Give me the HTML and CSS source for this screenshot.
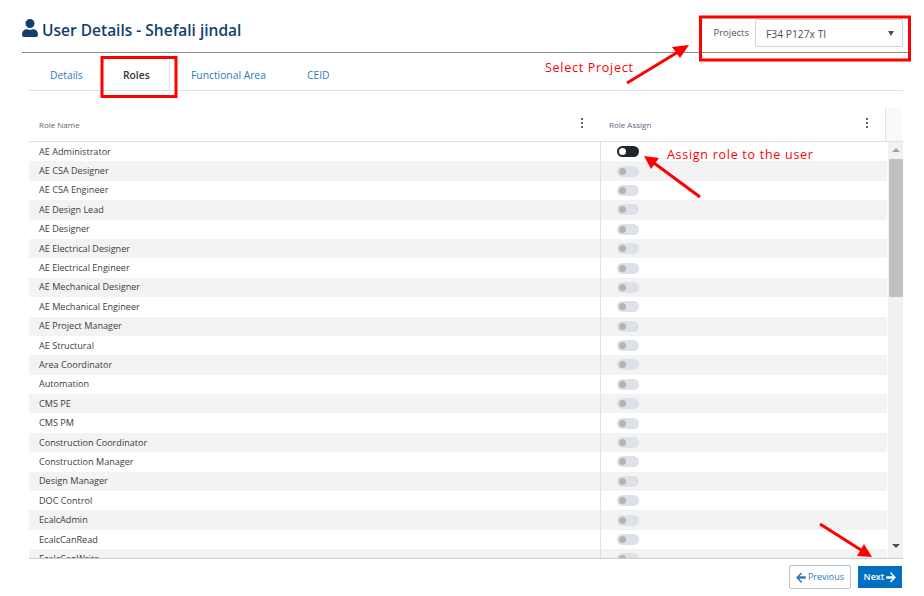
FILE: index.html
```html
<!DOCTYPE html>
<html lang="en">
<head>
<meta charset="utf-8">
<title>User Details</title>
<link rel="stylesheet" href="styles.css">
</head>
<body>
<div class="page">
  <header class="head">
    <h1 class="title">
      <svg class="user-icon" viewBox="0 0 448 512"><path d="M224 256a128 128 0 1 0 0-256 128 128 0 0 0 0 256zm90 32h-17a174 174 0 0 1-146 0h-17A134 134 0 0 0 0 422v42a48 48 0 0 0 48 48h352a48 48 0 0 0 48-48v-42a134 134 0 0 0-134-134z"/></svg>
      User Details - Shefali jindal
    </h1>
    <div class="projects">
      <span class="projects-label">Projects</span>
      <div class="select"><span class="select-value">F34 P127x TI</span><i class="caret"></i></div>
    </div>
  </header>
  <nav class="tabs">
    <a class="tab tab-details">Details</a>
    <a class="tab tab-roles">Roles</a>
    <a class="tab tab-fa">Functional Area</a>
    <a class="tab tab-ceid">CEID</a>
  </nav>
  <section class="grid">
    <div class="grid-head">
      <div class="hcell hcell-name"><span>Role Name</span><i class="dots"></i></div>
      <div class="hcell hcell-assign"><span>Role Assign</span><i class="dots"></i></div>
      <div class="hcell-end"></div>
    </div>
    <div class="grid-body">
      <div class="rows">
        <div class="row"><span class="name">AE Administrator</span><span class="assign"><i class="toggle on"></i></span></div>
        <div class="row"><span class="name">AE CSA Designer</span><span class="assign"><i class="toggle"></i></span></div>
        <div class="row"><span class="name">AE CSA Engineer</span><span class="assign"><i class="toggle"></i></span></div>
        <div class="row"><span class="name">AE Design Lead</span><span class="assign"><i class="toggle"></i></span></div>
        <div class="row"><span class="name">AE Designer</span><span class="assign"><i class="toggle"></i></span></div>
        <div class="row"><span class="name">AE Electrical Designer</span><span class="assign"><i class="toggle"></i></span></div>
        <div class="row"><span class="name">AE Electrical Engineer</span><span class="assign"><i class="toggle"></i></span></div>
        <div class="row"><span class="name">AE Mechanical Designer</span><span class="assign"><i class="toggle"></i></span></div>
        <div class="row"><span class="name">AE Mechanical Engineer</span><span class="assign"><i class="toggle"></i></span></div>
        <div class="row"><span class="name">AE Project Manager</span><span class="assign"><i class="toggle"></i></span></div>
        <div class="row"><span class="name">AE Structural</span><span class="assign"><i class="toggle"></i></span></div>
        <div class="row"><span class="name">Area Coordinator</span><span class="assign"><i class="toggle"></i></span></div>
        <div class="row"><span class="name">Automation</span><span class="assign"><i class="toggle"></i></span></div>
        <div class="row"><span class="name">CMS PE</span><span class="assign"><i class="toggle"></i></span></div>
        <div class="row"><span class="name">CMS PM</span><span class="assign"><i class="toggle"></i></span></div>
        <div class="row"><span class="name">Construction Coordinator</span><span class="assign"><i class="toggle"></i></span></div>
        <div class="row"><span class="name">Construction Manager</span><span class="assign"><i class="toggle"></i></span></div>
        <div class="row"><span class="name">Design Manager</span><span class="assign"><i class="toggle"></i></span></div>
        <div class="row"><span class="name">DOC Control</span><span class="assign"><i class="toggle"></i></span></div>
        <div class="row"><span class="name">EcalcAdmin</span><span class="assign"><i class="toggle"></i></span></div>
        <div class="row"><span class="name">EcalcCanRead</span><span class="assign"><i class="toggle"></i></span></div>
        <div class="row"><span class="name">EcalcCanWrite</span><span class="assign"><i class="toggle"></i></span></div>
      </div>
      <div class="scrollbar">
        <i class="sb-up"></i>
        <div class="sb-thumb"></div>
        <i class="sb-down"></i>
      </div>
    </div>
  </section>
  <footer class="foot">
    <button class="btn btn-prev"><svg class="btn-icon" viewBox="0 0 448 512"><path d="M257 472l-22 22a24 24 0 0 1-34 0L7 273a24 24 0 0 1 0-34L201 45a24 24 0 0 1 34 0l22 22a24 24 0 0 1 0 34L137 196h287a24 24 0 0 1 24 24v72a24 24 0 0 1-24 24H137l120 115a24 24 0 0 1 0 41z"/></svg><span class="btn-text">Previous</span></button>
    <button class="btn btn-next"><span class="btn-text">Next</span><svg class="btn-icon" viewBox="0 0 448 512"><path d="M191 40l22-22a24 24 0 0 1 34 0l194 221a24 24 0 0 1 0 34L247 467a24 24 0 0 1-34 0l-22-22a24 24 0 0 1 0-34l120-95H24a24 24 0 0 1-24-24v-72a24 24 0 0 1 24-24h287L191 75a24 24 0 0 1 0-35z"/></svg></button>
  </footer>

  <svg class="marks" viewBox="0 0 924 596" width="924" height="596">
    <rect class="mark-box" x="700.500" y="17" width="209" height="43"/>
    <rect class="mark-box" x="102" y="57.500" width="74" height="39"/>
    <path class="mark-line" d="M627 83L678 52"/>
    <polygon class="mark-head" points="689,45 680,58 672,47"/>
    <path class="mark-line" d="M700 197L654 163"/>
    <polygon class="mark-head" points="644,156 659,158 651,169"/>
    <path class="mark-line" d="M820 524L861 550"/>
    <polygon class="mark-head" points="872,557 857,556 864,544"/>
  </svg>
  <span class="note note-project">Select Project</span>
  <span class="note note-role">Assign role to the user</span>
</div>
</body>
</html>
```
FILE: styles.css
```css
* { box-sizing: border-box; }
html, body { margin: 0; padding: 0; background: #fff; }
body { font-family: "Open Sans", "Liberation Sans", sans-serif; overflow: hidden; }
.page { position: relative; width: 924px; height: 596px; overflow: hidden; padding-left: 22px; display: flex; flex-direction: column; }

.head { width: 888px; height: 53px; border-bottom: 1px solid #8a8a8a; display: flex; justify-content: space-between; padding-top: 19px; flex: none; }
.title { margin: 0; display: flex; align-items: center; gap: 4px; height: 21px; font-size: 15.5px; font-weight: 600; color: #123f6d; }
.user-icon { width: 16px; height: 18px; fill: #123f6d; margin-top: -4px; }
.projects { display: flex; gap: 6px; margin-right: 7px; margin-top: 0; }
.projects-label { font-size: 9.5px; color: #4a5560; line-height: 28px; }
.select { width: 148px; height: 28px; margin-top: 0; border: 1px solid #ced4da; border-radius: 2px; background: #fff; display: flex; align-items: center; justify-content: space-between; padding: 0 8px 0 10px; font-size: 10.3px; color: #495057; }
.select-value { padding-top: 2px; }
.caret { width: 0; height: 0; border-left: 3px solid transparent; border-right: 3px solid transparent; border-top: 5px solid #495057; }

.tabs { margin-left: 7px; width: 874px; height: 38px; border-bottom: 1px solid #dee2e6; display: flex; flex: none; }
.tab { font-size: 10.3px; color: #2b7cc0; line-height: 44px; }
.tab-details { margin-left: 21px; width: 53px; }
.tab-roles { width: 67px; padding-left: 20px; color: #333; font-weight: 600; border-right: 1px solid #dee2e6; }
.tab-fa { margin-left: 21px; width: 116px; }

.grid { margin: 17px 0 0 7px; width: 874px; height: 451px; border-bottom: 1px solid #ccc; flex: none; display: flex; flex-direction: column; overflow: hidden; }
.grid-head { height: 34px; flex: none; display: flex; border-bottom: 1px solid #dee2e6; }
.hcell { display: flex; justify-content: space-between; align-items: center; font-size: 8px; color: #666; }
.hcell-name { width: 572px; padding: 0 18px 0 10px; }
.hcell-assign { width: 285px; padding: 0 18px 0 8px; color: #5b6785; }
.hcell-end { width: 17px; background: #f8f9fa; border-left: 1px solid #dee2e6; margin-left: -1px; }
.dots { width: 2px; height: 2px; border-radius: 50%; background: #333; box-shadow: 0 -4px 0 #333, 0 4px 0 #333; margin-top: -3px; }

.grid-body { flex: 1; min-height: 0; display: flex; }
.rows { width: 858px; flex: none; }
.row { height: 19.4px; display: flex; align-items: center; }
.row:nth-child(even) { background: #f3f3f3; }
.name { width: 571px; padding-left: 10px; font-size: 9.1px; color: #3b3b3b; flex: none; margin-top: -1px; }
.assign { height: 100%; flex: 1; border-left: 1px solid #dee2e6; padding-left: 16px; display: flex; align-items: center; }
.toggle { display: block; width: 22px; height: 11px; border-radius: 6px; background: #dee2e6; position: relative; }
.toggle::before { content: ""; position: absolute; left: 2px; top: 2px; width: 7px; height: 7px; border-radius: 50%; background: #adb5bd; }
.toggle.on { background: #212529; }
.toggle.on::before { background: #fff; }

.scrollbar { width: 16px; background: #f1f1f1; display: flex; flex-direction: column; align-items: center; margin-left: 1px; padding-top: 6px; }
.sb-up { width: 0; height: 0; border-left: 4px solid transparent; border-right: 4px solid transparent; border-bottom: 4px solid #a3a3a3; }
.sb-thumb { width: 14px; height: 138px; background: #c1c1c1; margin-top: 7px; }
.sb-down { width: 0; height: 0; margin-top: 247px; border-left: 4px solid transparent; border-right: 4px solid transparent; border-top: 4px solid #505050; }

.foot { margin-right: 22px; height: 37px; padding-top: 6px; display: flex; justify-content: flex-end; align-items: flex-start; gap: 7px; width: 880px; }
.btn { font-family: inherit; font-size: 9px; display: flex; align-items: center; gap: 2px; padding: 0; justify-content: center; cursor: pointer; }
.btn-text { margin-top: -2px; }
.btn-icon { width: 10px; height: 11px; fill: currentColor; }
.btn-prev { width: 62px; height: 24px; background: #fff; border: 1px solid #b8c2cc; border-radius: 2px; color: #2b7cc0; }
.btn-next { width: 44px; height: 22px; margin-top: 1px; background: #0070c0; border: 0; color: #fff; font-weight: 600; }

.marks { position: absolute; left: 0; top: 0; pointer-events: none; }
.mark-box { fill: none; stroke: #f00; stroke-width: 3; }
.mark-line { fill: none; stroke: #f00; stroke-width: 3; }
.mark-head { fill: #f00; }
.note { position: absolute; color: #f00; font-size: 12.5px; letter-spacing: 0.72px; white-space: nowrap; line-height: 16px; }
.note-project { left: 545px; top: 60px; }
.note-role { left: 667px; top: 147px; }
```
